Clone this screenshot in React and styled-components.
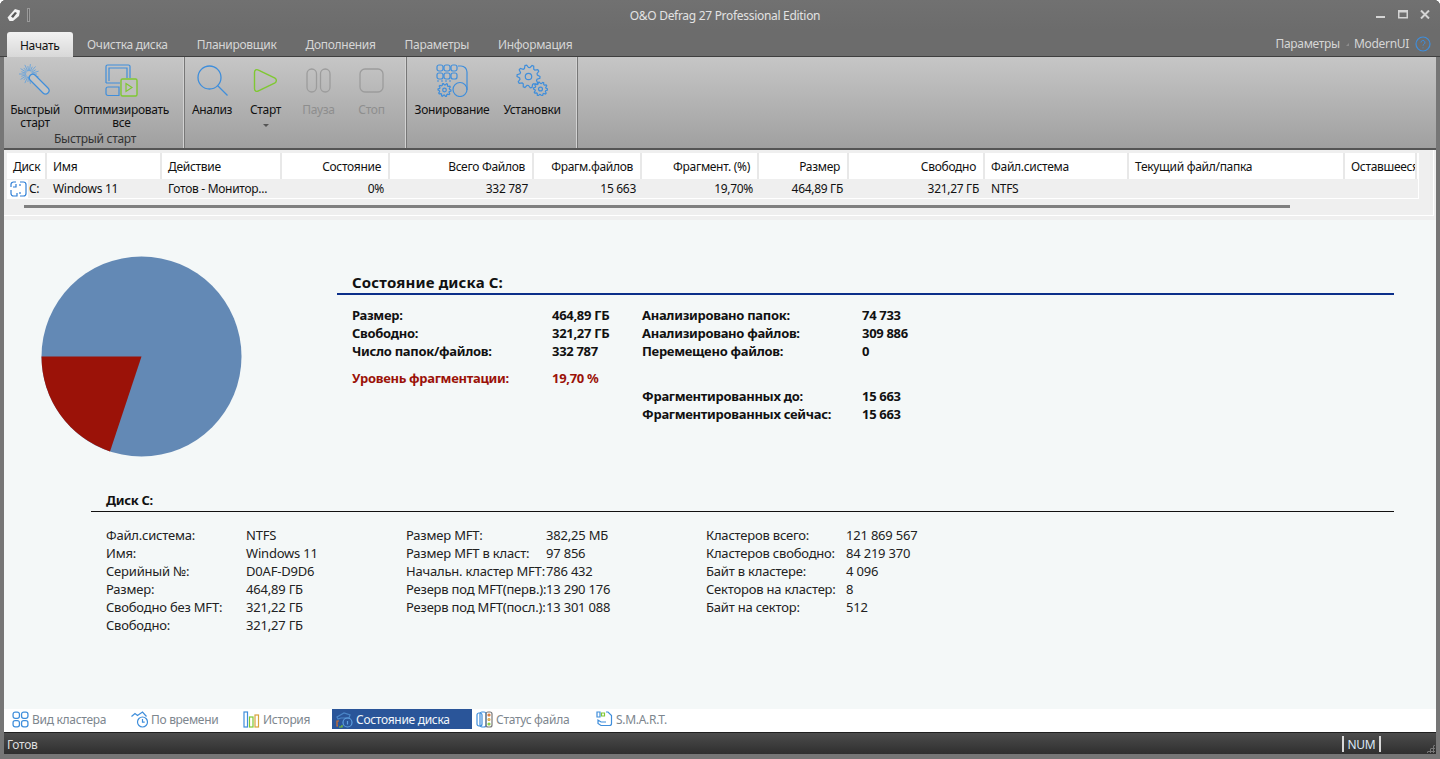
import React from "react";
import styled, { createGlobalStyle } from "styled-components";

const GlobalStyle = createGlobalStyle`
  html, body {
    margin: 0;
    height: 100%;
    background: #fff;
    overflow: hidden;
  }
  * { box-sizing: border-box; }
  body {
    font-family: "Noto Sans", "Open Sans", sans-serif;
    font-size: 12px;
    letter-spacing: -0.3px;
  }
`;

const BLUE = "#3f8edb";
const GREEN = "#7fc832";
const GREY = "#9c9c9c";

const Stroke = ({ size = 32, vb, children }) => (
  <svg width={size} height={size} viewBox={vb || `0 0 ${size} ${size}`} fill="none" strokeWidth="1.2" stroke={BLUE}>
    {children}
  </svg>
);

const gearPath = (cx, cy, r) => {
  const pts = [];
  const teeth = 10;
  for (let i = 0; i < teeth * 4; i++) {
    const a = (i / (teeth * 4)) * Math.PI * 2;
    const rr = i % 4 < 2 ? r : r * 0.78;
    pts.push(`${(cx + Math.cos(a) * rr).toFixed(2)},${(cy + Math.sin(a) * rr).toFixed(2)}`);
  }
  return `M${pts.join("L")}Z`;
};

const Gear = ({ cx, cy, r }) => (
  <>
    <path d={gearPath(cx, cy, r)} />
    <circle cx={cx} cy={cy} r={r * 0.28} />
  </>
);

const QuickIcon = () => (
  <Stroke size={32}>
    {Array.from({ length: 22 }).map((_, i) => {
      const a = (i / 22) * Math.PI * 2;
      return (
        <line
          key={i}
          x1={10 + Math.cos(a) * 3}
          y1={10 + Math.sin(a) * 3}
          x2={10 + Math.cos(a) * (i % 2 ? 10 : 8)}
          y2={10 + Math.sin(a) * (i % 2 ? 10 : 8)}
          strokeWidth="0.8"
          stroke="#5c9fe0"
        />
      );
    })}
    <rect x="-1" y="-3.5" width="25" height="7" rx="3.5" transform="translate(12 12) rotate(45)" fill="#c4c4c4" />
  </Stroke>
);

const OptimizeIcon = () => (
  <Stroke size={33}>
    <path d="M1 19V2.500A1.500 1.500 0 0 1 2.500 1h21A1.500 1.500 0 0 1 25 2.500V14" />
    <path d="M4 17V4h18v10" />
    <path d="M1 19h14" />
    <path d="M3 23h11v8.500H3a2 2 0 0 1-2-2V25a2 2 0 0 1 2-2z" />
    <rect x="16" y="15" width="16" height="17" rx="1.500" stroke={GREEN} fill="#c0c0c0" strokeWidth="1.400" />
    <path d="M21 19.500l6 4-6 4z" stroke={GREEN} />
  </Stroke>
);

const SearchIcon = () => (
  <Stroke size={31}>
    <circle cx="12.500" cy="12.500" r="11.500" strokeWidth="1.300" />
    <line x1="20.500" y1="20.500" x2="30.500" y2="30.500" strokeWidth="1.300" />
  </Stroke>
);

const PlayIcon = () => (
  <Stroke size={25}>
    <path d="M1.500 4.500c0-2.500 2-3.600 4-2.400l16.500 8c1.800 1 1.800 3.800 0 4.800l-16.500 8c-2 1.200-4 0-4-2.400z" stroke={GREEN} strokeWidth="1.400" />
  </Stroke>
);

const PauseIcon = () => (
  <Stroke size={25}>
    <rect x="1" y="1" width="9.500" height="23" rx="4.700" stroke={GREY} strokeWidth="1.300" />
    <rect x="14.500" y="1" width="9.500" height="23" rx="4.700" stroke={GREY} strokeWidth="1.300" />
  </Stroke>
);

const StopIcon = () => (
  <Stroke size={25}>
    <rect x="1" y="1" width="23" height="23" rx="5" stroke={GREY} strokeWidth="1.300" />
  </Stroke>
);

const ZoneIcon = () => (
  <Stroke size={33}>
    {[0, 1, 2].map((c) => [0, 1].map((r) => (
      <rect key={`${c}-${r}`} x={1 + c * 7} y={1 + r * 8} width="6" height="6" rx="2" />
    )))}
    <path d="M22 2h3a6 6 0 0 1 6 6v18" />
    <circle cx="24" cy="25.500" r="7" />
    <line x1="1" y1="17" x2="15" y2="17" strokeDasharray="2 2" />
    <Gear cx={8.500} cy={26} r={6.500} />
  </Stroke>
);

const GearsIcon = () => (
  <Stroke size={32}>
    <Gear cx={12.500} cy={12.500} r={11.500} />
    <Gear cx={24.500} cy={25} r={7} />
  </Stroke>
);

const Cluster = () => (
  <Stroke size={17} vb="0 0 16 16">
    <rect x="1" y="1" width="6" height="6" rx="2" />
    <rect x="9" y="1" width="6" height="6" rx="2" />
    <rect x="1" y="9" width="6" height="6" rx="2" />
    <rect x="9" y="9" width="6" height="6" rx="2" />
  </Stroke>
);

const Timer = () => (
  <Stroke size={17}>
    <circle cx="11.500" cy="11" r="5" />
    <path d="M11.500 8v3.200h2.200" />
    <path d="M0.500 5.500l3.500-3 2.500 2 5-3.500 4 4.500" />
  </Stroke>
);

const History = () => (
  <Stroke size={17}>
    <rect x="1" y="1" width="3.500" height="15" />
    <rect x="6.500" y="6" width="3.500" height="10" stroke={GREEN} />
    <rect x="12" y="4" width="3.500" height="12" stroke="#d8a23a" />
  </Stroke>
);

const DiskState = () => (
  <Stroke size={17}>
    <path d="M1 6l7-4 6 2-1 3H5l-3 1z" stroke="#4a86c8" />
    <circle cx="11.500" cy="11.500" r="4.500" stroke="#5ea0e0" />
    <path d="M11.500 10v3.500" stroke="#5ea0e0" />
    <path d="M3 10H1v5h1" stroke="#d8702a" />
    <path d="M3 16h3v-2" stroke={GREEN} />
  </Stroke>
);

const FileState = () => (
  <Stroke size={17}>
    <rect x="1" y="2" width="5" height="13" rx="2" />
    <rect x="4" y="1" width="6" height="15" rx="2" />
    <rect x="10" y="1" width="6" height="15" rx="2" stroke="#777" />
    <circle cx="13" cy="4" r="1" stroke="#d8702a" />
    <circle cx="13" cy="8.500" r="1" stroke="#d8a23a" />
    <circle cx="13" cy="13" r="1" stroke={GREEN} />
  </Stroke>
);

const Smart = () => (
  <Stroke size={17}>
    <path d="M1 1h3v5H1z" />
    <path d="M5.500 2h3v3h-3z" stroke={GREEN} />
    <path d="M10 1h2l3.500 3.500v8a2 2 0 0 1-2 2H5L2 12.500V9l3 2h5" />
  </Stroke>
);

const DriveIcon = () => (
  <Stroke size={17}>
    <path d="M1 6V3.500A2.500 2.500 0 0 1 3.500 1H6M6 3v3H3" strokeWidth="1.200" stroke="#2f7fd6" />
    <path d="M10 1h3.500A2.500 2.500 0 0 1 16 3.500v9a2.500 2.500 0 0 1-2.500 2.500H10" strokeWidth="1.200" stroke="#2f7fd6" />
    <path d="M1 9v3.500A2.500 2.500 0 0 0 3.500 15H7v-3" strokeWidth="1.200" stroke="#2f7fd6" />
    <path d="M10 3v2M10 11v2" strokeWidth="1.200" stroke="#2f7fd6" />
  </Stroke>
);

const WindowFrame = styled.div`
  height: 759px;
  display: flex;
  flex-direction: column;
  padding: 0 4px 5px;
  background: #767676;
  border-radius: 6px 6px 0 0;
  box-shadow: inset 0 1px 0 #5a5a5a;
  overflow: hidden;
`;

const TitleBar = styled.div`
  height: 30px;
  flex: none;
  margin: 0 -4px;
  padding: 0 10px 0 7px;
  display: flex;
  align-items: center;
  background: linear-gradient(#717171, #6c6c6c);
`;

const AppLogo = styled.div`
  display: flex;
  align-items: center;
  gap: 6px;
`;

const QuickSep = styled.div`
  width: 3px;
  height: 14px;
  border: 1px solid #9a9a9a;
  background: #666;
`;

const TitleText = styled.div`
  flex: 1;
  text-align: center;
  color: #e2e2e2;
  padding: 1px 0 0 44px;
`;

const WinButtons = styled.div`
  display: flex;
  align-items: center;
  gap: 12.500px;
  margin-top: -2px;
`;

const TabRow = styled.div`
  height: 27px;
  flex: none;
  margin: 0 -4px;
  padding: 2px 9px 0 7px;
  display: flex;
  align-items: flex-end;
  background: #6c6c6c;
  border-bottom: 1px solid #3f3f3f;
`;

const RibbonTab = styled.div`
  height: 25px;
  padding: 2px ${(p) => (p.$active ? "13px" : "14.500px")} 0;
  margin-bottom: ${(p) => (p.$active ? "-1px" : "0")};
  display: flex;
  align-items: center;
  color: ${(p) => (p.$active ? "#111" : "#d6d6d6")};
  background: ${(p) => (p.$active ? "linear-gradient(#f2f2f2, #d8d8d8)" : "transparent")};
  border-radius: 3px 3px 0 0;
`;

const TabRight = styled.div`
  margin-left: auto;
  height: 25px;
  display: flex;
  align-items: center;
  gap: 6px;
  color: #d6d6d6;
`;

const TinyArrow = styled.span`
  width: 0;
  height: 0;
  border-left: 3px solid transparent;
  border-bottom: 3px solid #8c8c8c;
  margin: 2px -1px 0 0;
`;

const Ribbon = styled.div`
  height: 93px;
  flex: none;
  display: flex;
  background: linear-gradient(#c6c6c6, #a0a0a0);
  border-bottom: 2px solid #555;
`;

const RibbonGroup = styled.div`
  width: ${(p) => p.$width}px;
  padding-left: ${(p) => p.$pad || 0}px;
  height: 91px;
  border-right: 1px solid #777;
  box-shadow: inset -1px 0 0 #d2d2d2;
  display: flex;
  flex-direction: column;
`;

const GroupButtons = styled.div`
  display: flex;
  height: 75px;
`;

const GroupLabel = styled.div`
  text-align: center;
  color: #333;
  line-height: 14px;
  padding-right: 4px;
`;

const RibbonButton = styled.div`
  width: ${(p) => p.$width}px;
  margin-left: ${(p) => p.$gap || 0}px;
  display: flex;
  flex-direction: column;
  align-items: center;
  text-align: center;
  line-height: 13px;
  color: ${(p) => (p.$off ? "#8e8e8e" : "#111")};
`;

const IconSlot = styled.div`
  height: 46px;
  padding-top: ${(p) => p.$top || 7}px;
  display: flex;
  align-items: flex-start;
  justify-content: center;
`;

const DropArrow = styled.span`
  width: 0;
  height: 0;
  margin-top: 8px;
  border-left: 3px solid transparent;
  border-right: 3px solid transparent;
  border-top: 3px solid #555;
`;

const TableArea = styled.div`
  flex: none;
  padding: 0 2px 4px 0;
  background: #efefef;
`;

const TableFrame = styled.div`
  height: 66px;
  padding: 3px 0 0 3px;
  background: #efefef;
  border: solid #fff;
  border-width: 0 1px 1px 0;
`;

const HeaderRow = styled.div`
  display: grid;
  grid-template-columns: ${(p) => p.$cols};
  height: 26px;
  background: #fff;
  margin-right: 14px;
`;

const DataRow = styled.div`
  display: grid;
  grid-template-columns: ${(p) => p.$cols};
  height: 20px;
  margin-right: 15px;
  background: #efefef;
  border-bottom: 1px solid #fff;
  box-shadow: 1px 0 0 #fff;
`;

const HeadCell = styled.div`
  padding: 0 ${(p) => (p.$right ? "7px" : "6px")} 0 6px;
  border-right: 2px solid #e8e8e8;
  line-height: 28px;
  white-space: nowrap;
  overflow: hidden;
  text-align: ${(p) => (p.$right ? "right" : "left")};
  color: #111;
`;

const DataCell = styled.div`
  padding: 0 6px 0 6px;
  line-height: 20px;
  white-space: nowrap;
  overflow: hidden;
  text-align: ${(p) => (p.$right ? "right" : "left")};
  color: #111;
`;

const DriveCell = styled.div`
  display: flex;
  align-items: center;
  color: #111;
  line-height: 20px;
`;

const DriveGlyph = styled.div`
  width: 21px;
  height: 19px;
  padding: 1px 0 0 3px;
  background: #fff;
  margin-right: 1px;
`;

const ScrollThumb = styled.div`
  margin: 6px 0 0 17px;
  width: 1266px;
  height: 3px;
  background: #7f7f7f;
`;

const Panel = styled.div`
  flex: 1;
  min-height: 0;
  background: #f4f8f8;
  padding: 36px 42px 0 37px;
  font-size: 13px;
  letter-spacing: -0.200px;
`;

const TopSection = styled.div`
  display: flex;
  align-items: flex-start;
`;

const StatePane = styled.div`
  flex: 1;
  margin: 17px 0 0 95px;
`;

const StateTitle = styled.div`
  font-size: 15px;
  font-weight: 700;
  letter-spacing: 0.150px;
  line-height: 18px;
  padding: 0 0 2px 15px;
  border-bottom: 2px solid #0b2f8a;
  color: #111;
`;

const StateGrid = styled.div`
  display: flex;
  padding: 11px 0 0 15px;
`;

const StateCol = styled.div`
  width: ${(p) => p.$width}px;
`;

const StatRow = styled.div`
  display: flex;
  height: 18px;
  line-height: 18px;
  font-weight: 700;
  letter-spacing: -0.300px;
  margin-top: ${(p) => p.$gap || 0}px;
  color: ${(p) => (p.$alert ? "#9b1208" : "#111")};
`;

const StatLabel = styled.div`
  width: ${(p) => p.$width}px;
  flex: none;
  white-space: nowrap;
`;

const DiskSection = styled.div`
  margin: 34px 0 0 50px;
`;

const DiskTitle = styled.div`
  font-weight: 700;
  letter-spacing: -0.300px;
  line-height: 18px;
  padding: 0 0 2px 15px;
  border-bottom: 1px solid #111;
  color: #111;
`;

const DiskGrid = styled.div`
  display: flex;
  padding: 14px 0 0 15px;
`;

const DiskCol = styled.div`
  width: 300px;
`;

const DiskRow = styled.div`
  display: flex;
  height: 18px;
  line-height: 18px;
  color: #222;
`;

const DiskLabel = styled.div`
  width: 140px;
  flex: none;
  white-space: nowrap;
`;

const ViewBar = styled.div`
  height: 23px;
  flex: none;
  display: flex;
  padding: 0 0 3px 4px;
  background: #fff;
`;

const ViewTab = styled.div`
  width: ${(p) => p.$width}px;
  padding-left: 4px;
  display: flex;
  align-items: center;
  gap: 3px;
  color: ${(p) => (p.$active ? "#f2f6fa" : "#7d868e")};
  background: ${(p) => (p.$active ? "#2a5599" : "transparent")};
`;

const StatusBar = styled.div`
  height: 22px;
  flex: none;
  display: flex;
  align-items: center;
  padding: 1px 0 0 3px;
  color: #dedede;
  background: linear-gradient(#4c4c4c, #2f2f2f);
  border-top: 1px solid #202020;
  position: relative;
`;

const NumBox = styled.div`
  margin-left: auto;
  margin-right: 55px;
  height: 16px;
  width: 39px;
  display: flex;
  align-items: center;
  justify-content: center;
  color: #dce8f4;
  border: solid #d8d8d8;
  border-width: 0 2px;
`;

const Grip = styled.div`
  position: absolute;
  right: 1px;
  bottom: 1px;
  width: 9px;
  height: 9px;
  background: radial-gradient(circle, #777 1px, transparent 1.100px) 0 0 / 3px 3px;
  clip-path: polygon(100% 0, 100% 100%, 0 100%);
`;

const COLS = "40px 115px 120px 108px 144px 108px 117px 90px 136px 144px 216px 72px";

const HEAD = [
  ["Диск"], ["Имя"], ["Действие"], ["Состояние", 1], ["Всего Файлов", 1], ["Фрагм.файлов", 1],
  ["Фрагмент. (%)", 1], ["Размер", 1], ["Свободно", 1], ["Файл.система"], ["Текущий файл/папка"], ["Оставшееся время"],
];

const ROW = [
  ["Windows 11"], ["Готов - Монитор..."], ["0%", 1], ["332 787", 1], ["15 663", 1], ["19,70%", 1],
  ["464,89 ГБ", 1], ["321,27 ГБ", 1], ["NTFS"], [""], [""],
];

const STATE_LEFT = [
  ["Размер:", "464,89 ГБ"],
  ["Свободно:", "321,27 ГБ"],
  ["Число папок/файлов:", "332 787"],
];

const STATE_RIGHT = [
  ["Анализировано папок:", "74 733"],
  ["Анализировано файлов:", "309 886"],
  ["Перемещено файлов:", "0"],
  ["Фрагментированных до:", "15 663", 27],
  ["Фрагментированных сейчас:", "15 663"],
];

const DISK_COLS = [
  [
    ["Файл.система:", "NTFS"],
    ["Имя:", "Windows 11"],
    ["Серийный №:", "D0AF-D9D6"],
    ["Размер:", "464,89 ГБ"],
    ["Свободно без MFT:", "321,22 ГБ"],
    ["Свободно:", "321,27 ГБ"],
  ],
  [
    ["Размер MFT:", "382,25 МБ"],
    ["Размер MFT в класт:", "97 856"],
    ["Начальн. кластер MFT:", "786 432"],
    ["Резерв под MFT(перв.):", "13 290 176"],
    ["Резерв под MFT(посл.):", "13 301 088"],
  ],
  [
    ["Кластеров всего:", "121 869 567"],
    ["Кластеров свободно:", "84 219 370"],
    ["Байт в кластере:", "4 096"],
    ["Секторов на кластер:", "8"],
    ["Байт на сектор:", "512"],
  ],
];

const VIEW_TABS = [
  ["Вид кластера", Cluster, 119],
  ["По времени", Timer, 112],
  ["История", History, 93],
  ["Состояние диска", DiskState, 140, true],
  ["Статус файла", FileState, 120],
  ["S.M.A.R.T.", Smart, 100],
];

export default function App() {
  return (
    <WindowFrame>
      <GlobalStyle />
      <TitleBar>
        <AppLogo>
          <svg width="14" height="14" viewBox="0 0 14 14">
            <path d="M0.500 9.500L8 1l5 1.500-1 5.500-6 5H2.500z" fill="#f0f0f0" />
            <path d="M4 8.500l4-4.500 2 1-4 5z" fill="#555" />
          </svg>
          <QuickSep />
        </AppLogo>
        <TitleText>O&amp;O Defrag 27 Professional Edition</TitleText>
        <WinButtons>
          <svg width="9" height="9" viewBox="0 0 9 9"><rect y="6" width="9" height="2" fill="#d4d4d4" /></svg>
          <svg width="10" height="9" viewBox="0 0 10 9"><rect x="0.750" y="0.750" width="8.500" height="7" fill="none" stroke="#d4d4d4" strokeWidth="1.500" /><rect x="0" y="0.500" width="10" height="2" fill="#d4d4d4" /></svg>
          <svg width="10" height="9" viewBox="0 0 10 9"><path d="M1 0.500l8 8M9 0.500l-8 8" stroke="#d4d4d4" strokeWidth="2" /></svg>
        </WinButtons>
      </TitleBar>

      <TabRow>
        <RibbonTab $active>Начать</RibbonTab>
        <RibbonTab>Очистка диска</RibbonTab>
        <RibbonTab>Планировщик</RibbonTab>
        <RibbonTab>Дополнения</RibbonTab>
        <RibbonTab>Параметры</RibbonTab>
        <RibbonTab>Информация</RibbonTab>
        <TabRight>
          Параметры
          <TinyArrow />
          ModernUI
          <svg width="16" height="16" viewBox="0 0 16 16" fill="none">
            <circle cx="8" cy="8" r="7" stroke={BLUE} strokeWidth="1.200" />
            <path d="M6 6.500a2 2 0 1 1 3 1.700c-.7.400-1 .8-1 1.500M8 11.500v.8" stroke={BLUE} />
          </svg>
        </TabRight>
      </TabRow>

      <Ribbon>
        <RibbonGroup $width={181} $pad={6}>
          <GroupButtons>
            <RibbonButton $width={50}>
              <IconSlot><QuickIcon /></IconSlot>
              Быстрый<br />старт
            </RibbonButton>
            <RibbonButton $width={93} $gap={15}>
              <IconSlot><OptimizeIcon /></IconSlot>
              Оптимизировать<br />все
            </RibbonButton>
          </GroupButtons>
          <GroupLabel>Быстрый старт</GroupLabel>
        </RibbonGroup>
        <RibbonGroup $width={222}>
          <GroupButtons>
            <RibbonButton $width={54}>
              <IconSlot $top={8}><SearchIcon /></IconSlot>
              Анализ
            </RibbonButton>
            <RibbonButton $width={53}>
              <IconSlot $top={11}><PlayIcon /></IconSlot>
              Старт
              <DropArrow />
            </RibbonButton>
            <RibbonButton $width={53} $off>
              <IconSlot $top={11}><PauseIcon /></IconSlot>
              Пауза
            </RibbonButton>
            <RibbonButton $width={53} $off>
              <IconSlot $top={11}><StopIcon /></IconSlot>
              Стоп
            </RibbonButton>
          </GroupButtons>
        </RibbonGroup>
        <RibbonGroup $width={171} $pad={5}>
          <GroupButtons>
            <RibbonButton $width={80}>
              <IconSlot><ZoneIcon /></IconSlot>
              Зонирование
            </RibbonButton>
            <RibbonButton $width={80}>
              <IconSlot><GearsIcon /></IconSlot>
              Установки
            </RibbonButton>
          </GroupButtons>
        </RibbonGroup>
      </Ribbon>

      <TableArea>
        <TableFrame>
          <HeaderRow $cols={COLS}>
            {HEAD.map(([text, right]) => (
              <HeadCell key={text} $right={right}>{text}</HeadCell>
            ))}
          </HeaderRow>
          <DataRow $cols={COLS}>
            <DriveCell>
              <DriveGlyph><DriveIcon /></DriveGlyph>
              C:
            </DriveCell>
            {ROW.map(([text, right], i) => (
              <DataCell key={i} $right={right}>{text}</DataCell>
            ))}
          </DataRow>
          <ScrollThumb />
        </TableFrame>
      </TableArea>

      <Panel>
        <TopSection>
          <svg width="201" height="201" viewBox="0 0 201 201">
            <circle cx="100.500" cy="100.500" r="100" fill="#6389b5" />
            <path d="M100.500 100.500H0.500A100 100 0 0 0 69 195.400z" fill="#9b1208" />
          </svg>
          <StatePane>
            <StateTitle>Состояние диска C:</StateTitle>
            <StateGrid>
              <StateCol $width={290}>
                {STATE_LEFT.map(([label, value]) => (
                  <StatRow key={label}>
                    <StatLabel $width={200}>{label}</StatLabel>
                    {value}
                  </StatRow>
                ))}
                <StatRow $alert $gap={9}>
                  <StatLabel $width={200}>Уровень фрагментации:</StatLabel>
                  19,70 %
                </StatRow>
              </StateCol>
              <StateCol $width={400}>
                {STATE_RIGHT.map(([label, value, gap]) => (
                  <StatRow key={label} $gap={gap}>
                    <StatLabel $width={220}>{label}</StatLabel>
                    {value}
                  </StatRow>
                ))}
              </StateCol>
            </StateGrid>
          </StatePane>
        </TopSection>

        <DiskSection>
          <DiskTitle>Диск C:</DiskTitle>
          <DiskGrid>
            {DISK_COLS.map((col, i) => (
              <DiskCol key={i}>
                {col.map(([label, value]) => (
                  <DiskRow key={label}>
                    <DiskLabel>{label}</DiskLabel>
                    {value}
                  </DiskRow>
                ))}
              </DiskCol>
            ))}
          </DiskGrid>
        </DiskSection>
      </Panel>

      <ViewBar>
        {VIEW_TABS.map(([label, Icon, width, active]) => (
          <ViewTab key={label} $width={width} $active={active}>
            <Icon />
            {label}
          </ViewTab>
        ))}
      </ViewBar>

      <StatusBar>
        Готов
        <NumBox>NUM</NumBox>
        <Grip />
      </StatusBar>
    </WindowFrame>
  );
}
